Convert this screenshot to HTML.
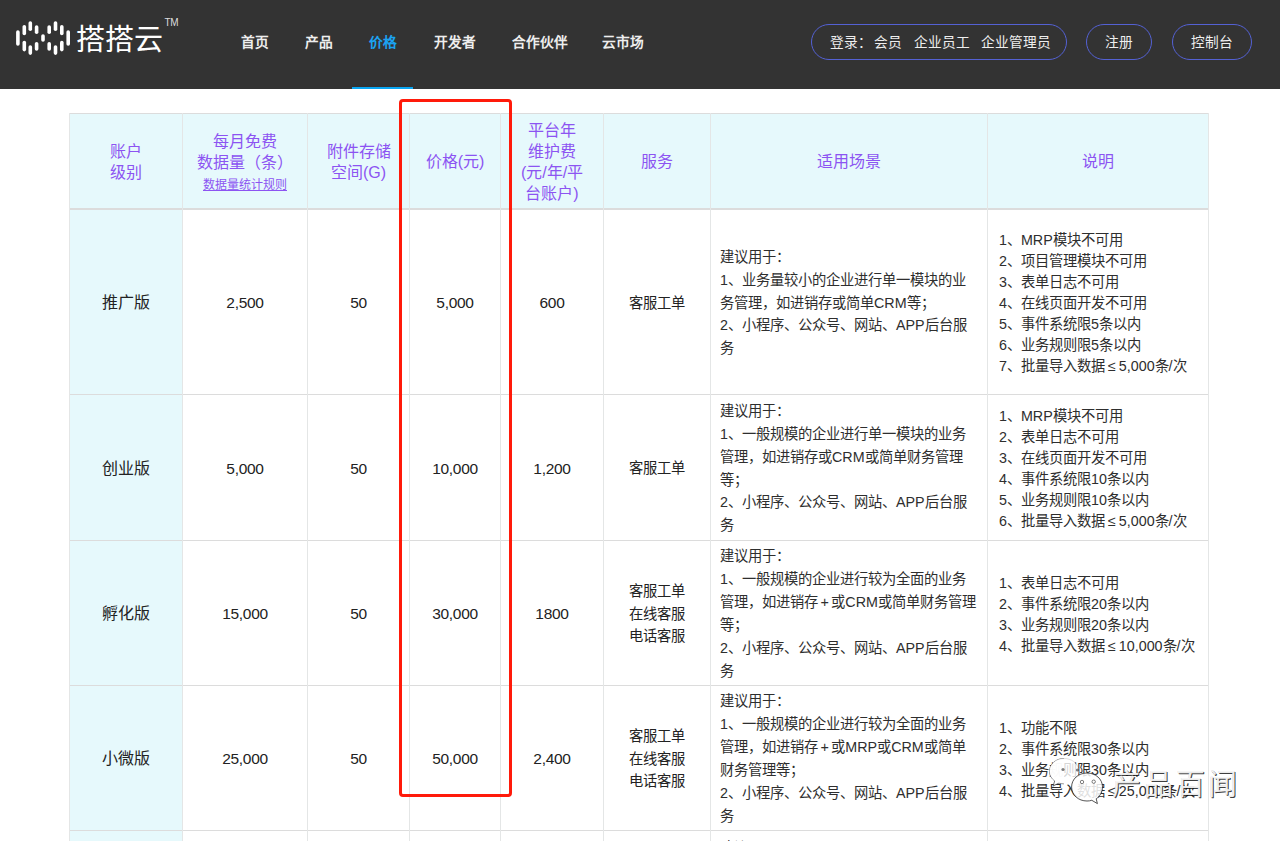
<!DOCTYPE html>
<html lang="zh-CN"><head><meta charset="utf-8">
<style>
*{margin:0;padding:0;box-sizing:border-box}
html,body{width:1280px;height:841px;overflow:hidden;background:#fff}
body{font-family:"Liberation Sans",sans-serif;position:relative;color:#222}
.hd{position:absolute;left:0;top:0;width:1280px;height:89px;background:#333}
.abs{position:absolute;white-space:nowrap}
.brand{left:76px;top:20px;font-size:29px;font-weight:300;color:#fff;line-height:40px;letter-spacing:0px}
.tm{left:164.5px;top:16.5px;font-size:10px;color:#ddd;line-height:12px;letter-spacing:-0.4px}
.nav{top:33.5px;font-size:13.7px;font-weight:bold;color:#eee;line-height:18px}
.ul{left:352px;top:87px;width:61px;height:2px;background:#0aa6f2}
.pill{position:absolute;top:23.5px;height:36px;border:1.5px solid #5461d4;border-radius:18px}
.pt{top:34px;font-size:13.7px;color:#eee;line-height:18px}
.grid{position:absolute;left:69px;top:113px}
.c{position:absolute;display:flex;align-items:center;justify-content:center;text-align:center;white-space:nowrap}
.hline{position:absolute;height:1px;background:#dcdcdc}
.vline{position:absolute;width:1px;background:#e2e5e5}
.th{color:#8c54f2;font-size:16px;line-height:21px;padding-top:1px}
.td{font-size:16px;line-height:21px;color:#222;padding-top:1px}
.num{font-size:15.5px;letter-spacing:-0.3px}
.sc{font-size:14.3px;line-height:22.9px;text-align:left;justify-content:flex-start;padding-left:9px;padding-top:2px;color:#2e2e2e}
.ds{font-size:14.3px;line-height:21px;text-align:left;justify-content:flex-start;padding-left:11px;padding-top:3px;color:#2e2e2e}
.red{position:absolute;left:399px;top:99px;width:113px;height:698px;border:3px solid #ff1a0a;border-radius:4px}
.bg{position:absolute}
.hl{position:absolute;background:#dcdcdc}
.vl{position:absolute;width:1px;background:#e4e6e6}
.lk{font-size:12px;text-decoration:underline;line-height:21px}
.sv{font-size:14.3px;line-height:22.9px;padding-top:2px}
.sc5{font-size:14.3px;line-height:22.9px}
.le{margin:0 3px}
.le2{margin:0 2.5px}
.wm{position:absolute;left:1112px;top:765px;font-size:29px;line-height:40px;font-weight:200;color:rgba(255,255,255,.92);white-space:nowrap;letter-spacing:3px;text-shadow:0.8px 0.8px 0.6px rgba(0,0,0,.75),-0.3px -0.3px 0.4px rgba(0,0,0,.35)}
</style></head><body>
<div class="hd">
<svg class="abs" style="left:0;top:0" width="90" height="89" viewBox="0 0 90 89">
<g fill="#fff">
<rect x="16.1" y="30.2" width="3.6" height="15.6" rx="1.8"/>
<rect x="22.5" y="24.9" width="3.6" height="10.4" rx="1.8"/>
<rect x="22.5" y="40.7" width="3.6" height="10.7" rx="1.8"/>
<rect x="28.5" y="21.2" width="3.6" height="9.9" rx="1.8"/>
<rect x="28.5" y="45.2" width="3.6" height="9.7" rx="1.8"/>
<rect x="34.8" y="25.2" width="3.6" height="8.8" rx="1.8"/>
<rect x="34.8" y="42" width="3.6" height="8.8" rx="1.8"/>
<rect x="41.2" y="34.3" width="3.6" height="7.5" rx="1.8"/>
<rect x="47.4" y="25.2" width="3.6" height="8.8" rx="1.8"/>
<rect x="47.4" y="42" width="3.6" height="8.8" rx="1.8"/>
<rect x="53.7" y="21.2" width="3.6" height="9.9" rx="1.8"/>
<rect x="53.7" y="45.2" width="3.6" height="9.7" rx="1.8"/>
<rect x="60" y="24.9" width="3.6" height="10.4" rx="1.8"/>
<rect x="60" y="40.7" width="3.6" height="10.7" rx="1.8"/>
<rect x="66.4" y="30.2" width="3.6" height="15.6" rx="1.8"/>
</g></svg>
<div class="abs brand">搭搭云</div>
<div class="abs tm">TM</div>
<div class="abs nav" style="left:241px">首页</div>
<div class="abs nav" style="left:305px">产品</div>
<div class="abs nav" style="left:369px;color:#1ba3f2">价格</div>
<div class="abs nav" style="left:434px">开发者</div>
<div class="abs nav" style="left:512px">合作伙伴</div>
<div class="abs nav" style="left:602px">云市场</div>
<div class="abs ul"></div>
<div class="pill" style="left:811px;width:256px"></div>
<div class="pill" style="left:1086px;width:66px"></div>
<div class="pill" style="left:1172px;width:80px"></div>
<div class="abs pt" style="left:830px">登录：</div>
<div class="abs pt" style="left:874px">会员</div>
<div class="abs pt" style="left:914px">企业员工</div>
<div class="abs pt" style="left:981px">企业管理员</div>
<div class="abs pt" style="left:1105px">注册</div>
<div class="abs pt" style="left:1191px">控制台</div>
</div>
<!--GRID-->
<div class="bg" style="left:69px;top:113px;width:1140px;height:95px;background:#e6f9fc"></div>
<div class="bg" style="left:69px;top:208px;width:113px;height:633px;background:#e6f9fc"></div>
<div class="hl" style="left:69px;top:113px;width:1140px;height:1px"></div>
<div class="hl" style="left:69px;top:208px;width:1140px;height:2px"></div>
<div class="hl" style="left:69px;top:394px;width:1140px;height:1px"></div>
<div class="hl" style="left:69px;top:540px;width:1140px;height:1px"></div>
<div class="hl" style="left:69px;top:685px;width:1140px;height:1px"></div>
<div class="hl" style="left:69px;top:830px;width:1140px;height:1px"></div>
<div class="vl" style="left:69px;top:113px;height:728px"></div>
<div class="vl" style="left:182px;top:113px;height:728px"></div>
<div class="vl" style="left:307px;top:113px;height:728px"></div>
<div class="vl" style="left:409px;top:113px;height:728px"></div>
<div class="vl" style="left:500px;top:113px;height:728px"></div>
<div class="vl" style="left:603px;top:113px;height:728px"></div>
<div class="vl" style="left:710px;top:113px;height:728px"></div>
<div class="vl" style="left:987px;top:113px;height:728px"></div>
<div class="vl" style="left:1208px;top:113px;height:728px"></div>
<div class="c th" style="left:70px;top:114px;width:112px;height:94px"><div>账户<br>级别</div></div>
<div class="c th" style="left:183px;top:114px;width:124px;height:94px"><div><div style="padding-top:4px">每月免费<br>数据量（条）<br><span class="lk">数据量统计规则</span></div></div></div>
<div class="c th" style="left:308px;top:114px;width:101px;height:94px"><div>附件存储<br>空间(G)</div></div>
<div class="c th" style="left:410px;top:114px;width:90px;height:94px"><div>价格(元)</div></div>
<div class="c th" style="left:501px;top:114px;width:102px;height:94px"><div>平台年<br>维护费<br>(元/年/平<br>台账户)</div></div>
<div class="c th" style="left:604px;top:114px;width:106px;height:94px"><div>服务</div></div>
<div class="c th" style="left:711px;top:114px;width:276px;height:94px"><div>适用场景</div></div>
<div class="c th" style="left:988px;top:114px;width:220px;height:94px"><div>说明</div></div>
<div class="c td" style="left:70px;top:210px;width:112px;height:184px"><div>推广版</div></div>
<div class="c td num" style="left:183px;top:210px;width:124px;height:184px"><div>2,500</div></div>
<div class="c td num" style="left:308px;top:210px;width:101px;height:184px"><div>50</div></div>
<div class="c td num" style="left:410px;top:210px;width:90px;height:184px"><div>5,000</div></div>
<div class="c td num" style="left:501px;top:210px;width:102px;height:184px"><div>600</div></div>
<div class="c td sv" style="left:604px;top:210px;width:106px;height:184px"><div>客服工单</div></div>
<div class="c sc" style="left:711px;top:210px;width:276px;height:184px"><div>建议用于：<br>1、业务量较小的企业进行单一模块的业<br>务管理，如进销存或简单CRM等；<br>2、小程序、公众号、网站、APP后台服<br>务</div></div>
<div class="c ds" style="left:988px;top:210px;width:220px;height:184px"><div>1、MRP模块不可用<br>2、项目管理模块不可用<br>3、表单日志不可用<br>4、在线页面开发不可用<br>5、事件系统限5条以内<br>6、业务规则限5条以内<br>7、批量导入数据<span class="le">≤</span>5,000条/次</div></div>
<div class="c td" style="left:70px;top:395px;width:112px;height:145px"><div>创业版</div></div>
<div class="c td num" style="left:183px;top:395px;width:124px;height:145px"><div>5,000</div></div>
<div class="c td num" style="left:308px;top:395px;width:101px;height:145px"><div>50</div></div>
<div class="c td num" style="left:410px;top:395px;width:90px;height:145px"><div>10,000</div></div>
<div class="c td num" style="left:501px;top:395px;width:102px;height:145px"><div>1,200</div></div>
<div class="c td sv" style="left:604px;top:395px;width:106px;height:145px"><div>客服工单</div></div>
<div class="c sc" style="left:711px;top:395px;width:276px;height:145px"><div>建议用于：<br>1、一般规模的企业进行单一模块的业务<br>管理，如进销存或CRM或简单财务管理<br>等；<br>2、小程序、公众号、网站、APP后台服<br>务</div></div>
<div class="c ds" style="left:988px;top:395px;width:220px;height:145px"><div>1、MRP模块不可用<br>2、表单日志不可用<br>3、在线页面开发不可用<br>4、事件系统限10条以内<br>5、业务规则限10条以内<br>6、批量导入数据<span class="le">≤</span>5,000条/次</div></div>
<div class="c td" style="left:70px;top:541px;width:112px;height:144px"><div>孵化版</div></div>
<div class="c td num" style="left:183px;top:541px;width:124px;height:144px"><div>15,000</div></div>
<div class="c td num" style="left:308px;top:541px;width:101px;height:144px"><div>50</div></div>
<div class="c td num" style="left:410px;top:541px;width:90px;height:144px"><div>30,000</div></div>
<div class="c td num" style="left:501px;top:541px;width:102px;height:144px"><div>1800</div></div>
<div class="c td sv" style="left:604px;top:541px;width:106px;height:144px"><div>客服工单<br>在线客服<br>电话客服</div></div>
<div class="c sc" style="left:711px;top:541px;width:276px;height:144px"><div>建议用于：<br>1、一般规模的企业进行较为全面的业务<br>管理，如进销存<span class="le2">+</span>或CRM或简单财务管理<br>等；<br>2、小程序、公众号、网站、APP后台服<br>务</div></div>
<div class="c ds" style="left:988px;top:541px;width:220px;height:144px"><div>1、表单日志不可用<br>2、事件系统限20条以内<br>3、业务规则限20条以内<br>4、批量导入数据<span class="le">≤</span>10,000条/次</div></div>
<div class="c td" style="left:70px;top:686px;width:112px;height:144px"><div>小微版</div></div>
<div class="c td num" style="left:183px;top:686px;width:124px;height:144px"><div>25,000</div></div>
<div class="c td num" style="left:308px;top:686px;width:101px;height:144px"><div>50</div></div>
<div class="c td num" style="left:410px;top:686px;width:90px;height:144px"><div>50,000</div></div>
<div class="c td num" style="left:501px;top:686px;width:102px;height:144px"><div>2,400</div></div>
<div class="c td sv" style="left:604px;top:686px;width:106px;height:144px"><div>客服工单<br>在线客服<br>电话客服</div></div>
<div class="c sc" style="left:711px;top:686px;width:276px;height:144px"><div>建议用于：<br>1、一般规模的企业进行较为全面的业务<br>管理，如进销存<span class="le2">+</span>或MRP或CRM或简单<br>财务管理等；<br>2、小程序、公众号、网站、APP后台服<br>务</div></div>
<div class="c ds" style="left:988px;top:686px;width:220px;height:144px"><div>1、功能不限<br>2、事件系统限30条以内<br>3、业务规则限30条以内<br>4、批量导入数据<span class="le">≤</span>25,000条/次</div></div>
<div class="abs sc5" style="left:720px;top:837px">建议用于：</div>
<svg class="abs" style="left:1048px;top:754px" width="64" height="54" viewBox="0 0 64 54">
<path d="M16 4.5c-8.3 0-14.5 5.8-14.5 12.8 0 3.9 2 7.3 5.2 9.6l-1.6 5.2 5.9-3.1c1.6.5 3.3.8 5 .8" fill="rgba(255,255,255,.85)" stroke="rgba(40,40,40,.8)" stroke-width=".8"/>
<ellipse cx="16" cy="17" rx="14.5" ry="12.5" fill="rgba(255,255,255,.8)" stroke="none"/>
<path d="M30.5 14.5C29 8.5 23 4.5 16 4.5" fill="none" stroke="rgba(40,40,40,.25)" stroke-width=".6"/>
<path d="M39 19c-8.6 0-15.4 6-15.4 14s6.8 14 15.4 14c1.7 0 3.3-.2 4.8-.7l5.6 3.3-1.2-4.8c3.8-2.6 6.3-6.9 6.3-11.8 0-8-6.9-14-15.5-14z" fill="rgba(255,255,255,.85)" stroke="rgba(30,30,30,.85)" stroke-width=".9"/>
<circle cx="15" cy="15.5" r="1.6" fill="rgba(40,40,40,.6)"/><circle cx="29.5" cy="16" r="1.6" fill="rgba(40,40,40,.6)"/>
<circle cx="34" cy="28" r="1.7" fill="none" stroke="rgba(30,30,30,.7)" stroke-width=".8"/><circle cx="45.7" cy="27.7" r="1.7" fill="none" stroke="rgba(30,30,30,.7)" stroke-width=".8"/>
</svg>
<div class="wm">产品百闻</div>
<!--/GRID-->
<div class="red"></div>
</body></html>
